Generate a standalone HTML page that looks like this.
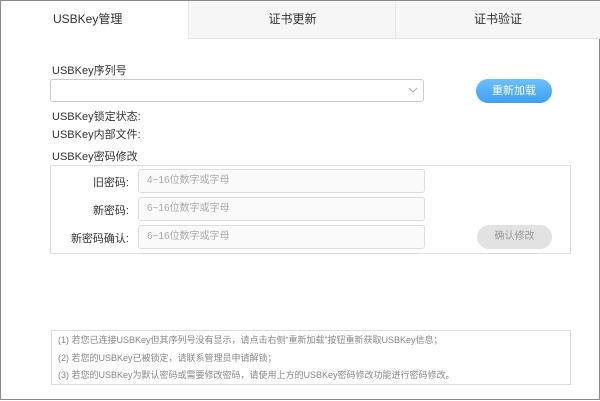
<!DOCTYPE html><html><head><meta charset="utf-8"><style>
body{margin:0;width:600px;height:401px;overflow:hidden;font-family:"Liberation Sans","Noto Sans CJK SC",sans-serif;color:#333;}
.frame{position:absolute;left:0;top:0;width:598px;height:398px;border:1px solid #8a8a8a;background:#fff;}
.a{position:absolute;}
.tab{position:absolute;top:0;height:37px;line-height:36px;font-size:12px;text-align:center;background:#f6f6f6;border-bottom:1px solid #e6e6e6;}
.inp{position:absolute;border:1px solid #ddd;border-radius:3px;background:#fafafa;font-size:10px;color:#aaa;line-height:22px;padding-left:8px;box-sizing:border-box;height:24px;}
.lbl{position:absolute;font-size:11px;width:82px;text-align:right;}
.t{font-size:11px;}
</style></head><body><div class="frame">
<div class="tab" style="left:0;width:187px;background:#fff;border-bottom:none;text-align:left;padding-left:52px;box-sizing:border-box">USBKey管理</div>
<div class="tab" style="left:187px;width:207px;border-left:1px solid #e8e8e8">证书更新</div>
<div class="tab" style="left:394px;width:204px;border-left:1px solid #e8e8e8">证书验证</div>
<div class="a t" style="left:51px;top:61px">USBKey序列号</div>
<div class="a" style="left:49px;top:78px;width:374px;height:23px;border:1px solid #ccc;border-radius:3px;box-sizing:border-box"></div>
<svg class="a" style="left:407px;top:85px" width="10" height="8"><path d="M1 2 L5 6 L9 2" fill="none" stroke="#aaa" stroke-width="1"/></svg>
<div class="a" style="left:475px;top:78px;width:76px;height:24px;border-radius:12px;background:linear-gradient(#6cc0ff,#3f9ff2);color:#fff;font-size:11px;text-align:center;line-height:24px">重新加载</div>
<div class="a t" style="left:51px;top:107px">USBKey锁定状态:</div>
<div class="a t" style="left:51px;top:125px">USBKey内部文件:</div>
<div class="a t" style="left:51px;top:147px">USBKey密码修改</div>
<div class="a" style="left:49px;top:164px;width:521px;height:89px;border:1px solid #ddd;box-sizing:border-box"></div>
<div class="lbl" style="left:46px;top:173px">旧密码:</div>
<div class="lbl" style="left:46px;top:201px">新密码:</div>
<div class="lbl" style="left:46px;top:229px">新密码确认:</div>
<div class="inp" style="left:137px;top:168px;width:287px">4~16位数字或字母</div>
<div class="inp" style="left:137px;top:196px;width:287px">6~16位数字或字母</div>
<div class="inp" style="left:137px;top:224px;width:287px">6~16位数字或字母</div>
<div class="a" style="left:476px;top:224px;width:75px;height:24px;border-radius:12px;background:#e2e2e2;color:#999;font-size:10px;text-align:center;line-height:24px">确认修改</div>
<div class="a" style="left:50px;top:329px;width:520px;height:55px;border:1px solid #ddd;box-sizing:border-box;font-size:9px;color:#888;line-height:17.5px;padding:1px 0 0 6px">
<div>(1) 若您已连接USBKey但其序列号没有显示，请点击右侧“重新加载”按钮重新获取USBKey信息；</div>
<div>(2) 若您的USBKey已被锁定，请联系管理员申请解锁；</div>
<div>(3) 若您的USBKey为默认密码或需要修改密码，请使用上方的USBKey密码修改功能进行密码修改。</div>
</div>
</div></body></html>
